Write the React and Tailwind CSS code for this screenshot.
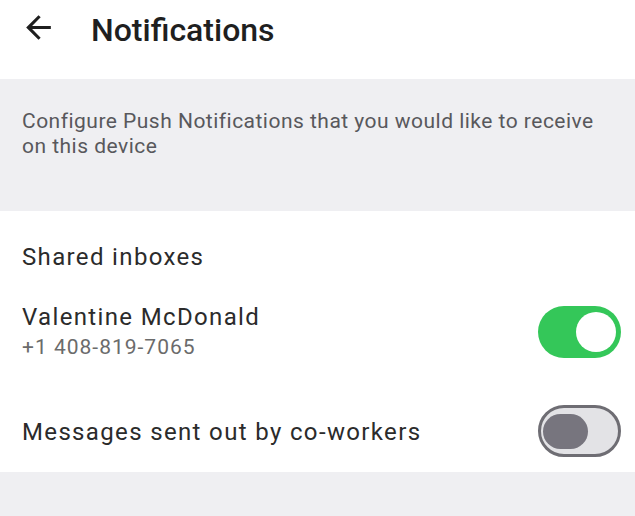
import React from "react";

const font = { fontFamily: "Roboto, 'Noto Sans', sans-serif" };

const Toggle = ({ on }) =>
  on ? (
    <div className="w-[83px] h-[52px] rounded-full bg-[#34c759] flex items-center justify-end pr-[5px]">
      <div className="w-[40px] h-[40px] rounded-full bg-white" />
    </div>
  ) : (
    <div className="w-[83px] h-[52px] rounded-full bg-[#e3e3e6] border-[3px] border-[#6e6d73] flex items-center pl-[2px]">
      <div className="w-[45px] h-[35px] rounded-full bg-[#77757e]" />
    </div>
  );

export default function App() {
  return (
    <div className="w-[635px] h-[516px] bg-white overflow-hidden" style={font}>
      <header className="h-[79px] flex items-start">
        <div className="w-[91px] pl-[20px] pt-[9px]">
          <svg width="37" height="37" viewBox="0 0 24 24" fill="#1f1f1f">
            <path d="M20 11H7.83l5.59-5.59L12 4l-8 8 8 8 1.41-1.41L7.83 13H20v-2z" />
          </svg>
        </div>
        <h1 className="mt-[10px] text-[32px] leading-[40px] font-medium text-[#1f1f1f]">Notifications</h1>
      </header>

      <section className="h-[132px] bg-[#efeff2] px-[22px] pt-[30px]">
        <p className="text-[21px] leading-[25px] text-[#58585c] tracking-[0.48px]">
          Configure Push Notifications that you would like to receive on this device
        </p>
      </section>

      <section className="h-[261px] pl-[22px] pr-[14px] flex flex-col">
        <h2 className="mt-[31px] text-[24px] leading-[30px] text-[#2b2b2b] tracking-[1.35px]">Shared inboxes</h2>
        <div className="mt-[30px] flex items-center justify-between">
          <div className="flex flex-col">
            <span className="text-[24px] leading-[30px] text-[#2b2b2b] tracking-[1.35px]">Valentine McDonald</span>
            <span className="text-[21px] leading-[30px] text-[#6b6b6b] tracking-[1px]">+1 408-819-7065</span>
          </div>
          <Toggle on />
        </div>
        <div className="mt-[43px] flex items-center justify-between">
          <span className="pt-[2px] text-[24px] leading-[30px] text-[#2b2b2b] tracking-[1.35px]">
            Messages sent out by co-workers
          </span>
          <Toggle />
        </div>
      </section>

      <section className="h-[44px] bg-[#efeff2]" />
    </div>
  );
}
